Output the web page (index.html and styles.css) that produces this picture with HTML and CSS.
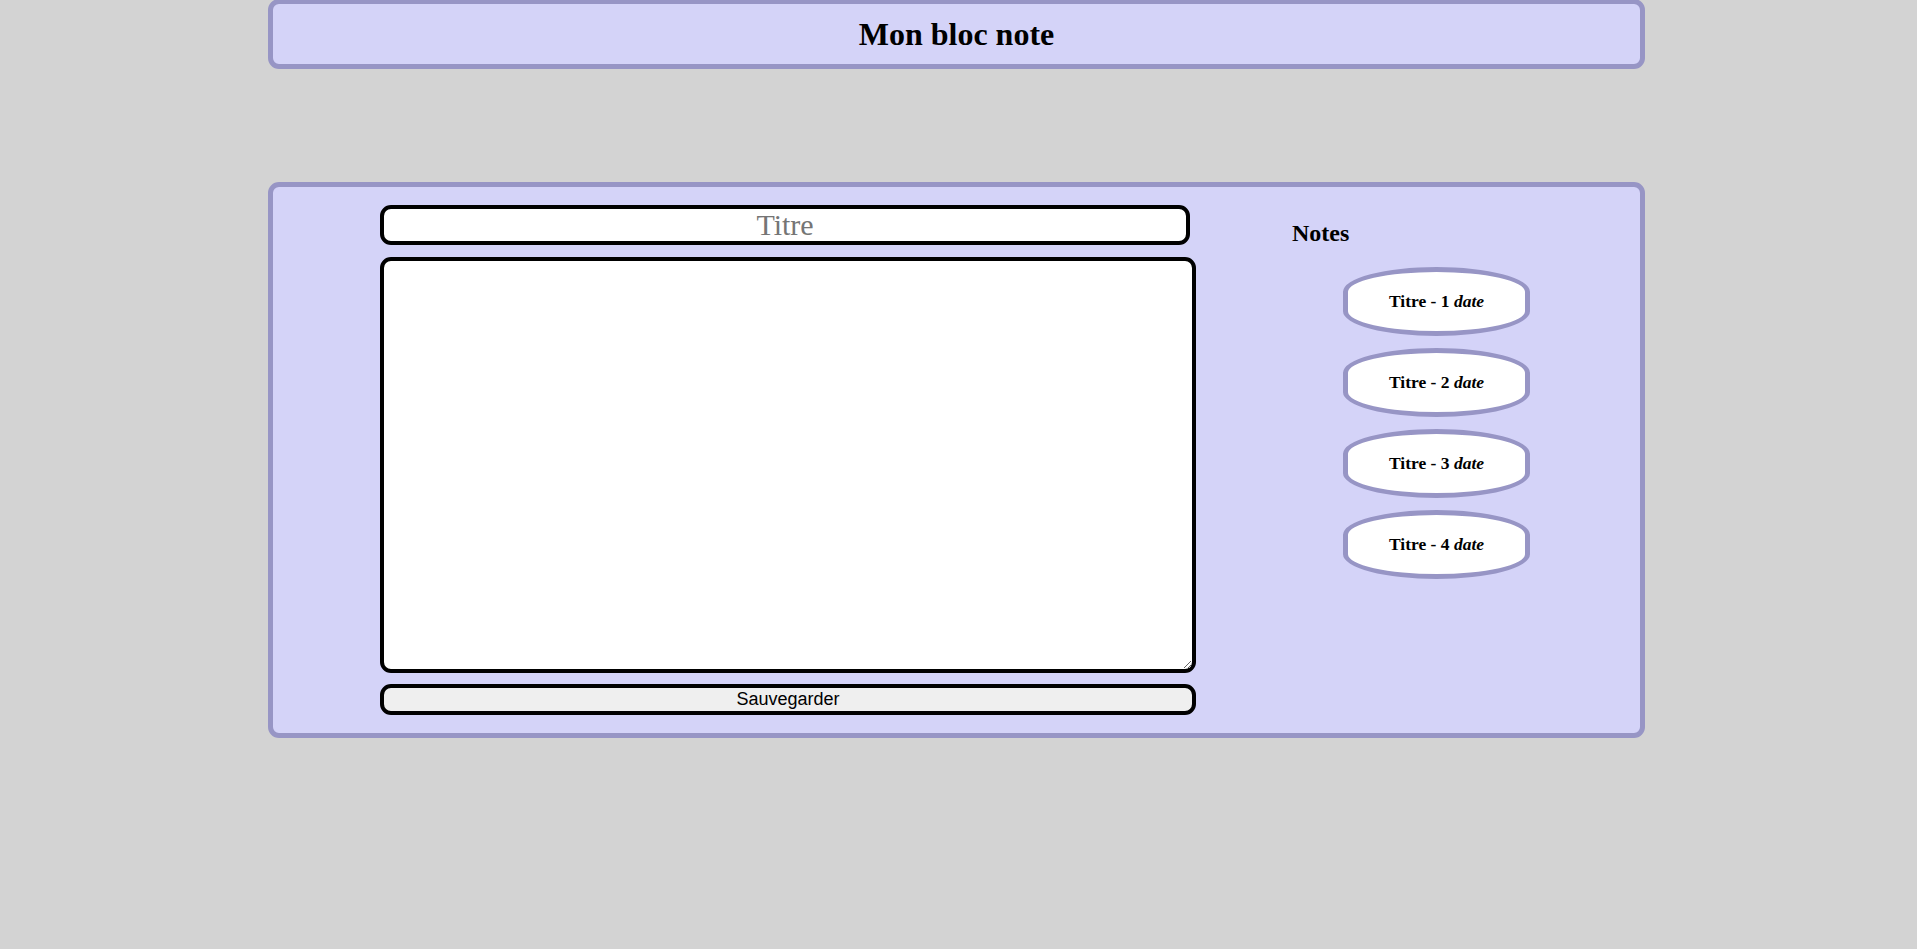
FILE: index.html
```html
<!DOCTYPE html>
<html lang="fr">
<head>
<meta charset="utf-8">
<title>Mon bloc note</title>
<link rel="stylesheet" href="styles.css">
</head>
<body>
<div class="page">
  <header class="header">
    <h1 class="header-title">Mon bloc note</h1>
  </header>
  <main class="panel">
    <form class="editor">
      <input class="title-input" type="text" placeholder="Titre">
      <textarea class="body-input"></textarea>
      <button class="save-btn" type="button">Sauvegarder</button>
    </form>
    <section class="notes">
      <h2 class="notes-title">Notes</h2>
      <ul class="note-list">
        <li class="note">Titre - 1 <em>date</em></li>
        <li class="note">Titre - 2 <em>date</em></li>
        <li class="note">Titre - 3 <em>date</em></li>
        <li class="note">Titre - 4 <em>date</em></li>
      </ul>
    </section>
  </main>
</div>
</body>
</html>
```
FILE: styles.css
```css
html, body {
  margin: 0;
  padding: 0;
  background: #d3d3d3;
  font-family: "Liberation Serif", "Times New Roman", serif;
}

.page {
  width: 1377px;
  margin-left: 268px;
}

.header {
  box-sizing: border-box;
  height: 70px;
  margin-top: -1px;
  background: #d4d3f8;
  border: 5px solid #9795c5;
  border-radius: 11px;
  display: flex;
  align-items: center;
  justify-content: center;
}

.header-title {
  margin: 0;
  font-size: 32px;
  font-weight: bold;
  color: #000;
}

.panel {
  box-sizing: border-box;
  margin-top: 113px;
  height: 556px;
  background: #d4d3f8;
  border: 5px solid #9795c5;
  border-radius: 11px;
  padding: 18px 0 18px 107px;
  display: flex;
  align-items: flex-start;
}

.editor {
  width: 816px;
  display: flex;
  flex-direction: column;
  margin: 0;
}

.title-input {
  box-sizing: border-box;
  width: 810px;
  height: 40px;
  margin: 0;
  padding: 0 4px;
  border: 4px solid #000;
  border-radius: 11px;
  background: #fff;
  font-family: "Liberation Serif", "Times New Roman", serif;
  font-size: 30px;
  text-align: center;
  outline: none;
}

.title-input::placeholder {
  color: #757575;
}

.body-input {
  box-sizing: border-box;
  width: 816px;
  height: 416px;
  margin: 12px 0 0 0;
  padding: 4px;
  border: 4px solid #000;
  border-radius: 11px;
  background: #fff;
  font-family: "Liberation Serif", "Times New Roman", serif;
  font-size: 16px;
  outline: none;
}

.save-btn {
  box-sizing: border-box;
  width: 816px;
  height: 31px;
  margin: 11px 0 0 0;
  padding: 0 6px;
  border: 4px solid #000;
  border-radius: 11px;
  background: #efefef;
  color: #000;
  font-family: "Liberation Sans", Arial, sans-serif;
  font-size: 18px;
}

.notes {
  margin-left: 96px;
  display: flex;
  flex-direction: column;
}

.notes-title {
  margin: 15px 0 0 0;
  font-size: 24px;
  line-height: 27px;
  font-weight: bold;
}

.note-list {
  list-style: none;
  margin: 20px 0 0 0;
  padding: 0 0 0 51px;
  display: flex;
  flex-direction: column;
  gap: 12px;
}

.note {
  box-sizing: border-box;
  width: 187px;
  height: 69px;
  background: #fff;
  border: 5px solid #9795c5;
  border-radius: 50% / 36%;
  display: flex;
  align-items: center;
  justify-content: center;
  font-size: 17.5px;
  font-weight: bold;
  white-space: pre;
}

.note em {
  font-style: italic;
}
```
